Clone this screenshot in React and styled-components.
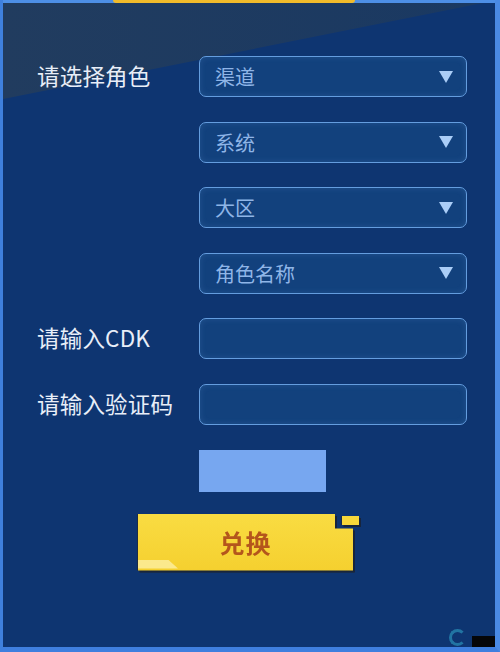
import React from 'react';
import styled, { createGlobalStyle } from 'styled-components';

const Global = createGlobalStyle`
  body {
    margin: 0;
    background: #0e3570;
    font-family: "Noto Sans CJK SC", "Noto Sans", sans-serif;
  }
`;

const Frame = styled.div`
  position: relative;
  width: 500px;
  height: 652px;
  box-sizing: border-box;
  display: flex;
  flex-direction: column;
  border-left: 3px solid #3f80dd;
  border-right: 5px solid #4a8ae4;
  border-bottom: 5px solid #3f7fdf;
  overflow: hidden;
`;

const TopEdge = styled.div`
  height: 3px;
  background: #4d8fe6;
  display: flex;
`;

const Tab = styled.div`
  margin-left: 110px;
  width: 242px;
  background: #f1bb2b;
  border-radius: 0 0 6px 6px;
`;

const Panel = styled.div`
  position: relative;
  flex: 1;
  background: #0e3571;
  padding: 53px 0 0 34px;
`;

// grey-blue slanted band in the top left corner
const Wedge = styled.div`
  position: absolute;
  left: 0;
  top: 0;
  width: 480px;
  height: 96px;
  background: linear-gradient(90deg, #213c5f, #1a3962);
  clip-path: polygon(0 0, 480px 0, 0 96px);
`;

const Form = styled.div`
  position: relative;
  display: grid;
  grid-template-columns: 162px 268px;
  grid-auto-rows: 41px;
  row-gap: 24.6px;
`;

const Label = styled.div`
  grid-column: 1;
  align-self: center;
  margin-top: -3px;
  color: #e8eef8;
  font-size: 22.5px;
  line-height: 1;
  letter-spacing: 0.2px;
`;

const Field = styled.div`
  grid-column: 2;
  box-sizing: border-box;
  display: flex;
  align-items: center;
  justify-content: space-between;
  padding: 0 13px 0 15px;
  background: #12417d;
  border: 1.5px solid #649ddf;
  border-radius: 7px;
  box-shadow: inset 0 0 6px rgba(110, 165, 230, 0.18);
  color: #8fb5e7;
  font-size: 20px;
`;

const Arrow = styled.span`
  width: 0;
  height: 0;
  border-left: 7px solid transparent;
  border-right: 7px solid transparent;
  border-top: 12px solid #aacdf7;
`;

const Captcha = styled.div`
  grid-column: 2;
  width: 127px;
  height: 42px;
  background: #77a7f0;
`;

const ButtonWrap = styled.div`
  position: relative;
  margin: 23px 0 0 101px;
  width: 221px;
  height: 57px;
  filter: drop-shadow(2px 2px 0 #17253d) drop-shadow(-1px 0 0 #1d2c46);
`;

const ButtonBody = styled.div`
  position: relative;
  width: 215px;
  height: 57px;
  display: flex;
  align-items: center;
  justify-content: center;
  background: linear-gradient(180deg, #f9dc42, #f5d02f);
  clip-path: polygon(0 0, 197px 0, 197px 15px, 215px 15px, 215px 57px, 0 57px);
  color: #b4561c;
  font-size: 25px;
  font-weight: 700;
  letter-spacing: 1px;
  cursor: pointer;

  &::before {
    content: '';
    position: absolute;
    left: 0;
    bottom: 2px;
    width: 40px;
    height: 9px;
    background: #fbe98c;
    clip-path: polygon(0 0, 30px 0, 40px 9px, 0 9px);
  }
`;

const Corner = styled.div`
  position: absolute;
  left: 204px;
  top: 2px;
  width: 17px;
  height: 9px;
  background: #f8d83a;
`;

const Watermark = styled.div`
  position: absolute;
  right: -5px;
  bottom: -5px;
  display: flex;
  align-items: flex-end;
  gap: 6px;
`;

const MarkLogo = styled.span`
  width: 11px;
  height: 11px;
  margin-bottom: 6px;
  border-radius: 50%;
  border: 3px solid #2a8fb8;
  border-right-color: transparent;
  opacity: 0.7;
`;

const MarkBlock = styled.span`
  width: 28px;
  height: 16px;
  background: #050608;
`;

const selects = ['渠道', '系统', '大区', '角色名称'];

export default function App() {
  return (
    <>
      <Global />
      <Frame>
        <TopEdge>
          <Tab />
        </TopEdge>
        <Panel>
          <Wedge />
          <Form>
            <Label>请选择角色</Label>
            {selects.map((s) => (
              <Field key={s}>
                {s}
                <Arrow />
              </Field>
            ))}
            <Label>请输入CDK</Label>
            <Field />
            <Label>请输入验证码</Label>
            <Field />
            <Captcha />
          </Form>
          <ButtonWrap>
            <ButtonBody>兑换</ButtonBody>
            <Corner />
          </ButtonWrap>
        </Panel>
        <Watermark>
          <MarkLogo />
          <MarkBlock />
        </Watermark>
      </Frame>
    </>
  );
}
